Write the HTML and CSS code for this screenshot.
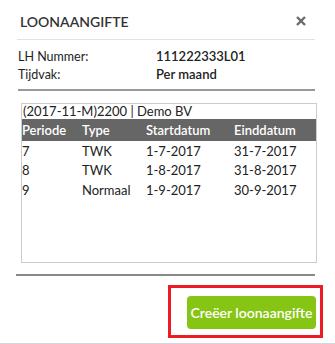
FILE: index.html
```html
<!DOCTYPE html>
<html lang="nl">
<head>
  <meta charset="UTF-8" />
  <title>Loonaangifte</title>
  <link rel="stylesheet" href="styles.css">
</head>
<body>
  <div id="modal">
    <!-- kop -->
    <div class="head">
      <h2>LOONAANGIFTE</h2>
      <svg class="close" width="10" height="10" viewBox="0 0 10 10"><path d="M1 1L9 9M9 1L1 9" stroke="#6a6a6a" stroke-width="2.4"/></svg>
    </div>

    <div class="info">
      <div class="row"><span class="lbl">LH Nummer:</span><b>111222333L01</b></div>
      <div class="row"><span class="lbl">Tijdvak:</span><b>Per maand</b></div>
    </div>

    <div class="box">
      <div class="caption">(2017-11-M)2200 | Demo BV</div>
      <table>
        <tr><th>Periode</th><th>Type</th><th>Startdatum</th><th>Einddatum</th></tr>
        <tr><td>7</td><td>TWK</td><td>1-7-2017</td><td>31-7-2017</td></tr>
        <tr><td>8</td><td>TWK</td><td>1-8-2017</td><td>31-8-2017</td></tr>
        <tr><td>9</td><td>Normaal</td><td>1-9-2017</td><td>30-9-2017</td></tr>
      </table>
    </div>

    <div class="rule"></div>
    <div class="foot">
      <div class="mark"><button>Creëer loonaangifte</button></div>
    </div>
  </div>
</body>
</html>
```

FILE: styles.css
```css
body, html { margin:0; padding:0; background:#fff; font-family:'Lato','Open Sans',sans-serif; color:#222; }
#modal { width:335px; height:343px; border-bottom:1px solid #d4d6dc; display:flex; flex-direction:column; }
/* kop */
.head { height:40px; margin:0 20px 0 17px; border-bottom:1px solid #e2e2e2; display:flex; align-items:center; justify-content:space-between; box-sizing:border-box; padding:3px 9px 0 3px; }
.head h2 { margin:0; font-size:14px; font-weight:600; color:#333; }
.info { margin:7px 20px 0 18px; padding-bottom:6px; border-bottom:2px solid #999; font-size:12.5px; }
.info .row { display:flex; height:18px; align-items:center; }
.info .lbl { width:138px; }
.info b { font-weight:600; font-size:13px; }
/* tabel */
.box { margin:12px 18px 0 21px; height:160px; border:1px solid #ccc; box-sizing:border-box; font-size:13px; }
.caption { height:15px; line-height:15px; padding-left:1px; }
table { width:100%; border-collapse:collapse; }
th { background:#666; color:#fff; font-weight:600; text-align:left; height:22px; padding:0; }
td { height:19.5px; padding:0; }
th:nth-child(1), td:nth-child(1) { width:60px; }
th:nth-child(2), td:nth-child(2) { width:64px; }
th:nth-child(3), td:nth-child(3) { width:88px; }
/* voet */
.rule { margin:11px 20px 0 16px; border-top:2px solid #888; }
.foot { display:flex; justify-content:flex-end; padding:9px 12px 0 0; }
.mark { border:3px solid #ec1c24; padding:8px 4px 6px 16px; }
.mark button { display:block; width:129px; height:33px; background:#86c514; color:#fff; border:none; border-radius:4px; font-family:inherit; font-size:14px; font-weight:600; padding:0; }
```
